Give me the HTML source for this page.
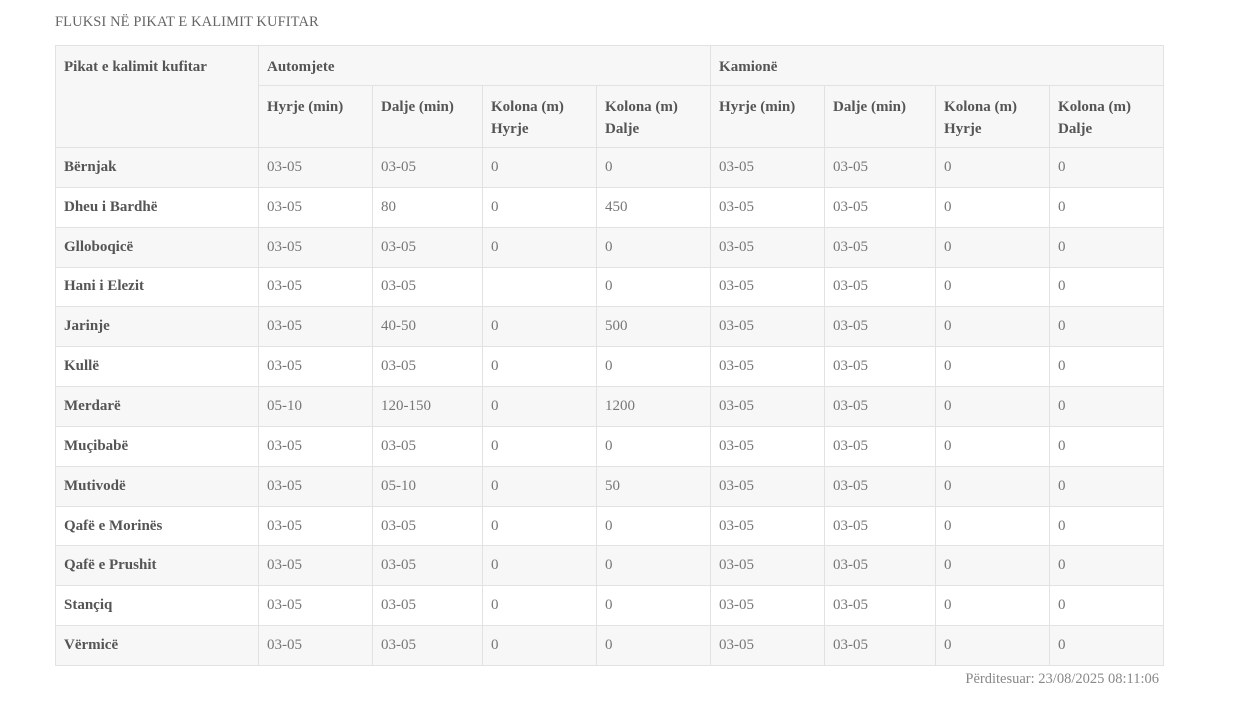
<!DOCTYPE html>
<html><head><meta charset="utf-8"><style>
body{margin:0;background:#fff;font-family:"Liberation Serif",serif;color:#666;width:1252px;height:718px;overflow:hidden}
.t{position:absolute;left:55px;top:14px;font-size:14.5px;color:#666;letter-spacing:0.1px}
table{position:absolute;left:55px;top:45px;border-collapse:collapse;table-layout:fixed;width:1108px}
td,th{border:1px solid #e2e2e2;padding:0 8px;font-size:15px;text-align:left}
th{background:#f7f7f7;font-weight:bold;color:#555;vertical-align:top;padding-top:10px;line-height:22px}
td{height:38.85px;color:#777;vertical-align:middle}
td:first-child{font-weight:bold;color:#555}
tr.o td{background:#f7f7f7}
.u{position:absolute;right:93px;top:671px;font-size:14.5px;color:#888}
</style></head><body>
<div class="t">FLUKSI NË PIKAT E KALIMIT KUFITAR</div>
<table>
<colgroup><col style="width:203px"><col style="width:114px"><col style="width:110px"><col style="width:114px"><col style="width:114px"><col style="width:114px"><col style="width:111px"><col style="width:114px"><col style="width:114px"></colgroup>
<tr style="height:40px"><th rowspan="2">Pikat e kalimit kufitar</th><th colspan="4">Automjete</th><th colspan="4">Kamionë</th></tr>
<tr style="height:62px"><th>Hyrje (min)</th><th>Dalje (min)</th><th>Kolona (m) Hyrje</th><th>Kolona (m) Dalje</th><th>Hyrje (min)</th><th>Dalje (min)</th><th>Kolona (m) Hyrje</th><th>Kolona (m) Dalje</th></tr>
<tr class="o"><td>Bërnjak</td><td>03-05</td><td>03-05</td><td>0</td><td>0</td><td>03-05</td><td>03-05</td><td>0</td><td>0</td></tr>
<tr><td>Dheu i Bardhë</td><td>03-05</td><td>80</td><td>0</td><td>450</td><td>03-05</td><td>03-05</td><td>0</td><td>0</td></tr>
<tr class="o"><td>Glloboqicë</td><td>03-05</td><td>03-05</td><td>0</td><td>0</td><td>03-05</td><td>03-05</td><td>0</td><td>0</td></tr>
<tr><td>Hani i Elezit</td><td>03-05</td><td>03-05</td><td></td><td>0</td><td>03-05</td><td>03-05</td><td>0</td><td>0</td></tr>
<tr class="o"><td>Jarinje</td><td>03-05</td><td>40-50</td><td>0</td><td>500</td><td>03-05</td><td>03-05</td><td>0</td><td>0</td></tr>
<tr><td>Kullë</td><td>03-05</td><td>03-05</td><td>0</td><td>0</td><td>03-05</td><td>03-05</td><td>0</td><td>0</td></tr>
<tr class="o"><td>Merdarë</td><td>05-10</td><td>120-150</td><td>0</td><td>1200</td><td>03-05</td><td>03-05</td><td>0</td><td>0</td></tr>
<tr><td>Muçibabë</td><td>03-05</td><td>03-05</td><td>0</td><td>0</td><td>03-05</td><td>03-05</td><td>0</td><td>0</td></tr>
<tr class="o"><td>Mutivodë</td><td>03-05</td><td>05-10</td><td>0</td><td>50</td><td>03-05</td><td>03-05</td><td>0</td><td>0</td></tr>
<tr><td>Qafë e Morinës</td><td>03-05</td><td>03-05</td><td>0</td><td>0</td><td>03-05</td><td>03-05</td><td>0</td><td>0</td></tr>
<tr class="o"><td>Qafë e Prushit</td><td>03-05</td><td>03-05</td><td>0</td><td>0</td><td>03-05</td><td>03-05</td><td>0</td><td>0</td></tr>
<tr><td>Stançiq</td><td>03-05</td><td>03-05</td><td>0</td><td>0</td><td>03-05</td><td>03-05</td><td>0</td><td>0</td></tr>
<tr class="o"><td>Vërmicë</td><td>03-05</td><td>03-05</td><td>0</td><td>0</td><td>03-05</td><td>03-05</td><td>0</td><td>0</td></tr>
</table>
<div class="u">Përditesuar: 23/08/2025 08:11:06</div>
</body></html>
